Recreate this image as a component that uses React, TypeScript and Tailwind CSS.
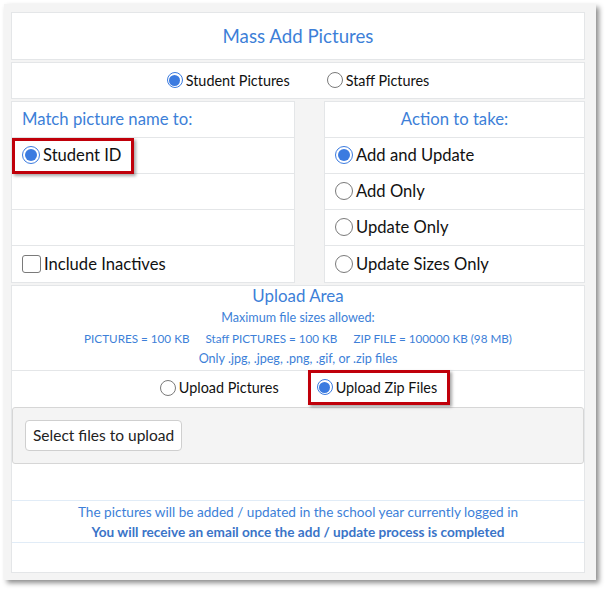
const blue = 'text-[#3d7fd8]';

function Radio({ checked, small }: { checked?: boolean; small?: boolean }) {
    const size = small ? 'h-[16px] w-[16px]' : 'h-[18px] w-[18px]';
    return checked ? (
        <span className={`inline-flex shrink-0 items-center justify-center rounded-full border border-[#3b7be0] bg-white ${size}`}>
            <span className={`rounded-full bg-[#3b7be0] ${small ? 'h-[11px] w-[11px]' : 'h-[12px] w-[12px]'}`} />
        </span>
    ) : (
        <span className={`inline-block shrink-0 rounded-full border border-[#7a7a7a] bg-white ${size}`} />
    );
}

function Row({ children, last }: { children?: React.ReactNode; last?: boolean }) {
    return (
        <div className={`flex h-[36px] items-center px-[10px] ${last ? '' : 'border-b border-[#e4e6e8]'}`}>{children}</div>
    );
}

function RadioLabel({ checked, label, small }: { checked?: boolean; label: string; small?: boolean }) {
    return (
        <label className={`flex items-center text-[#111] ${small ? 'text-[14.4px]' : 'text-[16.6px]'}`}>
            <Radio checked={checked} small={small} />
            <span className="ml-[3px]">{label}</span>
        </label>
    );
}

export default function App() {
    return (
        <div className="min-h-[589px] bg-white pl-[4px] pt-[4px] font-['Lato',sans-serif]">
            <div className="h-[576px] w-[592px] bg-[#f4f4f4] pb-[7px] pl-[7px] pr-[11px] pt-[8px] shadow-[3px_3px_5px_rgba(0,0,0,0.45)]">
                {/* title */}
                <div className="flex h-[48px] items-center justify-center border border-[#e4e6e8] bg-white">
                    <h1 className={`text-[18.7px] ${blue}`}>Mass Add Pictures</h1>
                </div>

                {/* picture type */}
                <div className="mt-[2px] flex h-[37px] items-center justify-center gap-[37px] border border-[#e4e6e8] bg-white">
                    <RadioLabel checked label="Student Pictures" small />
                    <RadioLabel label="Staff Pictures" small />
                </div>

                <div className="mt-[2px] flex justify-between">
                    <div className="w-[284px] border border-[#e4e6e8] bg-white">
                        <Row>
                            <span className={`text-[16.7px] ${blue}`}>Match picture name to:</span>
                        </Row>
                        <div className="flex h-[36px] items-center border-b border-[#e4e6e8]">
                            <div className="flex h-[36px] items-center border-[3px] border-[#c0000a] pl-[7px] pr-[9px] shadow-[2px_2px_3px_rgba(0,0,0,0.35)]">
                                <RadioLabel checked label="Student ID" />
                            </div>
                        </div>
                        <Row />
                        <Row />
                        <Row last>
                            <label className="flex items-center text-[16.6px] text-[#111]">
                                <span className="inline-block h-[18px] w-[19px] rounded-[3px] border border-[#7a7a7a] bg-white" />
                                <span className="ml-[3px]">Include Inactives</span>
                            </label>
                        </Row>
                    </div>
                    <div className="w-[261px] border border-[#e4e6e8] bg-white">
                        <div className="flex h-[36px] items-center justify-center border-b border-[#e4e6e8]">
                            <span className={`text-[16.7px] ${blue}`}>Action to take:</span>
                        </div>
                        <Row>
                            <RadioLabel checked label="Add and Update" />
                        </Row>
                        <Row>
                            <RadioLabel label="Add Only" />
                        </Row>
                        <Row>
                            <RadioLabel label="Update Only" />
                        </Row>
                        <Row last>
                            <RadioLabel label="Update Sizes Only" />
                        </Row>
                    </div>
                </div>

                {/* upload */}
                <div className="mt-[2px] border border-[#e4e6e8] bg-white">
                    <div className={`flex flex-col items-center border-b border-[#e4e6e8] ${blue}`}>
                        <div className="text-[16.9px] leading-[20px]">Upload Area</div>
                        <div className="mt-[2px] text-[12.6px] leading-[20px]">Maximum file sizes allowed:</div>
                        <div className="flex gap-[16px] text-[11.7px] leading-[20px]">
                            <span>PICTURES = 100 KB</span>
                            <span>Staff PICTURES = 100 KB</span>
                            <span>ZIP FILE = 100000 KB (98 MB)</span>
                        </div>
                        <div className="text-[12.6px] leading-[22px]">Only .jpg, .jpeg, .png, .gif, or .zip files</div>
                    </div>
                    <div className="flex h-[36px] items-start justify-center gap-[29px] pl-[14px]">
                        <div className="flex h-[34px] items-center">
                            <RadioLabel label="Upload Pictures" small />
                        </div>
                        <div className="-mt-[1px] flex h-[35px] items-center border-[3px] border-[#c0000a] pl-[6px] pr-[10px] shadow-[2px_2px_3px_rgba(0,0,0,0.35)]">
                            <RadioLabel checked label="Upload Zip Files" small />
                        </div>
                    </div>
                    <div className="flex h-[57px] items-center rounded-[3px] border border-[#d6d6d6] bg-[#f4f4f4] px-[12px]">
                        <button className="h-[31px] rounded-[4px] border border-[#cfcfcf] bg-white px-[7px] text-[15.5px] text-[#222]">
                            Select files to upload
                        </button>
                    </div>
                    <div className="h-[36px]" />
                    <div className={`flex h-[43px] flex-col items-center justify-center border-y border-[#e1ecf7] text-[13.6px] leading-[20px] ${blue}`}>
                        <div>The pictures will be added / updated in the school year currently logged in</div>
                        <div className="font-bold text-[#3a74c8]">You will receive an email once the add / update process is completed</div>
                    </div>
                    <div className="h-[29px]" />
                </div>
            </div>
        </div>
    );
}
